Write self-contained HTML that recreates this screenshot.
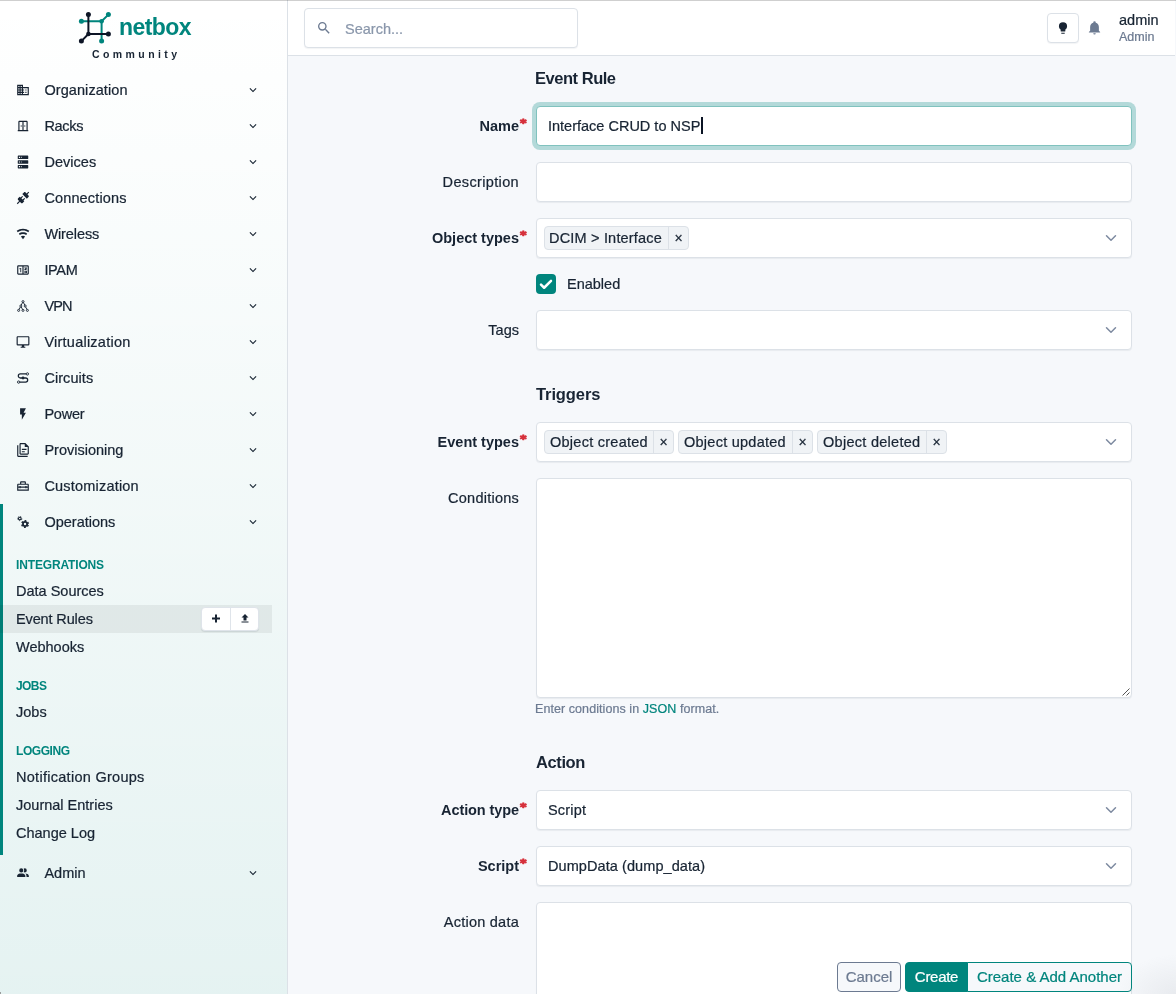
<!DOCTYPE html>
<html lang="en">
<head>
<meta charset="utf-8">
<title>Add a new event rule | NetBox</title>
<style>
*{box-sizing:border-box}
html,body{margin:0;padding:0}
html{width:1176px;height:994px;overflow:hidden;background:#f6f8fb}
body{width:1176px;height:994px;overflow:hidden;position:relative;background:#f6f8fb;color:#182433;
 font-family:"Liberation Sans",sans-serif;font-size:14px;line-height:20px;-webkit-text-stroke:.22px}
svg{display:block}
.topline{position:absolute;left:0;top:0;width:1176px;height:1px;background:rgba(0,0,0,.19);z-index:50}

/* ---------- sidebar ---------- */
.sidebar{position:absolute;left:0;top:0;width:288px;height:994px;border-right:1px solid #dce1e7;
 background:linear-gradient(180deg,rgba(0,133,125,0) 0%,rgba(0,133,125,.1) 100%),#fff}
.brand{position:absolute;left:0;top:0;width:272px;height:72px}
.brand svg{position:absolute;left:76px;top:9px}
.brand .word{position:absolute;left:119px;top:11px;font-weight:700;font-size:23px;line-height:32px;color:#00857d;letter-spacing:-.55px}
.brand .sub{position:absolute;left:92px;top:45.6px;font-weight:700;font-size:10.5px;line-height:16px;color:#182433;letter-spacing:3.42px;white-space:nowrap}
.nav{position:absolute;left:0;top:72px;width:287px;margin:0;padding:0;list-style:none}
.nav>li{position:relative;height:36px}
.nav>li .ico{position:absolute;left:16px;top:11px;width:14px;height:14px}
.nav>li .lbl{position:absolute;left:44.4px;top:8px;line-height:20px;font-size:14.5px;color:#182433;white-space:nowrap}
.nav>li .chev{position:absolute;left:245.5px;top:11px;width:14px;height:14px}
.nav>li.open{height:auto;border-left:3px solid #00857d}
.nav>li.open .head{position:relative;height:36px;margin-left:-3px}
.menu{padding:0 0 8px 0;margin-left:-3px}
.menu .hd{height:25px;margin-top:12px;padding-left:16px;line-height:27px;font-size:12px;font-weight:700;color:#00857d;text-transform:uppercase;white-space:nowrap}
.menu .it{position:relative;height:28px;padding-left:16px;line-height:28px;font-size:14.5px;color:#182433;white-space:nowrap}
.menu .it.act{background:rgba(0,0,0,.06);width:272px}
.bgrp{position:absolute;left:201px;top:2px;width:58px;height:24px;background:#fff;border:1px solid #dfe4ea;border-radius:4px;box-shadow:0 1px 1px rgba(24,36,51,.1);display:flex}
.bgrp span{width:28px;height:22px;display:flex;align-items:center;justify-content:center}
.bgrp svg{transform:translateY(-.5px)}
.bgrp span+span{border-left:1px solid #dfe4ea;width:28px}

/* ---------- topbar ---------- */
.topbar{position:absolute;left:288px;top:0;width:887px;height:56px;background:#fff;border-bottom:1px solid #dce1e7}
.search{position:absolute;left:16px;top:8px;width:274px;height:40px;border:1px solid #dce1e7;border-radius:4px;background:#fff;box-shadow:0 1px 1px rgba(24,36,51,.05)}
.search svg{position:absolute;left:11px;top:11px}
.search .ph{position:absolute;left:40px;top:10px;line-height:20px;color:#8a97ab;font-size:14.5px}
.tbtn{position:absolute;left:759px;top:13px;width:32px;height:30px;border:1px solid #dce1e7;border-radius:4px;background:#fff;box-shadow:0 1px 1px rgba(24,36,51,.05)}
.tbtn svg{position:absolute;left:8px;top:7px}
.bell{position:absolute;left:799px;top:20px}
.user{position:absolute;left:831px;top:11px;line-height:17px}
.user b{display:block;font-weight:400;font-size:14.5px;color:#182433;line-height:18px}
.user i{display:block;font-style:normal;font-size:12.5px;color:#6c7a91;line-height:16px}

.l.req,.h,.brand .word,.brand .sub,.menu .hd{-webkit-text-stroke:0}
/* ---------- form ---------- */
.sidebar,.topbar,main{will-change:transform}
main{position:absolute;left:0;top:0;width:1176px;height:994px;overflow:hidden}
.h{position:absolute;left:536px;margin:0;font-size:16.5px;font-weight:700;line-height:24px;color:#182433;white-space:nowrap;letter-spacing:-.1px}
.l{position:absolute;right:657px;line-height:20px;font-size:14.5px;color:#182433;white-space:nowrap;text-align:right}
.l.req{font-weight:700}
.l.req svg{position:absolute;left:100%;top:2.2px;margin-left:.3px}
.f{position:absolute;left:536px;width:596px;height:40px;border:1px solid #dce1e7;border-radius:4px;background:#fff;box-shadow:0 1px 1px rgba(24,36,51,.06)}
.f.focus{border-color:#80c2be;box-shadow:0 0 0 4px rgba(0,133,125,.27)}
.f .v{position:absolute;left:11px;top:9px;line-height:20px;font-size:14.5px;white-space:nowrap}
.f .caret{position:absolute;top:10px;width:2px;height:17px;background:#0b1424}
.f .sel{position:absolute;right:14px;top:13px}
.tag{position:absolute;top:7px;height:24px;border:1px solid #dce1e7;border-radius:4px;background:#f0f3f6;line-height:22px;font-size:14.5px;white-space:nowrap}
.tag .t{position:absolute;left:5px;top:0}
.tag .x{position:absolute;right:0;top:0;width:20px;height:22px;border-left:1px solid #dce1e7;text-align:center;font-size:14px}
.chk{position:absolute;left:536px;top:274px;width:20px;height:20px;border-radius:4px;background:#00857d}
.chkl{position:absolute;left:567px;top:274px;line-height:20px;font-size:14.5px}
.help{position:absolute;left:535px;top:700px;font-size:12.5px;line-height:18px;color:#6c7a91;white-space:nowrap}
.help a{color:#00857d;text-decoration:none}
.btn{position:absolute;top:962px;height:30px;border:1px solid;line-height:28px;font-size:15px;text-align:center;white-space:nowrap;background:#f6f8fb}
.b1{left:837px;width:64px;border-color:#6c7a91;color:#6c7a91;border-radius:4px}
.b2{left:905px;width:63px;border-color:#00857d;background:#00857d;color:#fff;border-radius:4px 0 0 4px}
.b3{left:967px;width:165px;border-color:#00857d;color:#00857d;border-radius:0 4px 4px 0}
.grip{position:absolute;right:1px;bottom:1px}
.corner{position:absolute;right:0;bottom:0;width:60px;height:40px;background:radial-gradient(ellipse at 100% 100%,rgba(120,125,135,.10),rgba(120,125,135,0) 70%);pointer-events:none}

.bl{position:absolute;left:0;bottom:0;width:1px;height:2px;background:#9a9c9c}
</style>
</head>
<body>
<div class="topline"></div>
<aside class="sidebar">
<div class="brand"><svg width="38" height="38" viewBox="76 9 38 38">
<g stroke-width="2" fill="none" stroke-linecap="round">
<path stroke="#00857d" d="M81.4 21.3H101.6V41.1M101.6 21.3L108.4 14.6"/>
<path stroke="#0d1526" d="M88.4 14.6V34H108.4M88.4 34L81.4 41.1"/>
</g>
<g fill="#00857d"><circle cx="108.4" cy="14.6" r="2.5"/><circle cx="81.4" cy="21.3" r="2.5"/><circle cx="101.6" cy="21.3" r="2.3"/><circle cx="101.6" cy="41.1" r="2.5"/></g>
<g fill="#0d1526"><circle cx="88.4" cy="14.6" r="2.5"/><circle cx="88.4" cy="34" r="2.3"/><circle cx="108.4" cy="34" r="2.5"/><circle cx="81.4" cy="41.1" r="2.5"/></g>
</svg><span class="word">netbox</span><span class="sub">Community</span></div>
<ul class="nav">
<li><svg class="ico" viewBox="0 0 24 24" fill="#182433"><path d="M18,15H16V17H18M18,11H16V13H18M20,19H12V17H14V15H12V13H14V11H12V9H20M10,7H8V5H10M10,11H8V9H10M10,15H8V13H10M10,19H8V17H10M6,7H4V5H6M6,11H4V9H6M6,15H4V13H6M6,19H4V17H6M12,7V3H2V21H22V7H12Z"/></svg><span class="lbl"><span style="letter-spacing:0.08px">Organization</span></span><svg class="chev" viewBox="0 0 24 24"><path fill="#182433" d="M7.41,8.58L12,13.17L16.59,8.58L18,10L12,16L6,10L7.41,8.58Z"/></svg></li>
<li><svg class="ico" viewBox="0 0 24 24" fill="#182433"><path d="M10 13H8V11H10V13M16 11H14V13H16V11M21 19V21H3V19H4V5C4 3.9 4.9 3 6 3H18C19.1 3 20 3.9 20 5V19H21M11 5H6V19H11V5M18 5H13V19H18V5Z"/></svg><span class="lbl"><span style="letter-spacing:-0.28px">Racks</span></span><svg class="chev" viewBox="0 0 24 24"><path fill="#182433" d="M7.41,8.58L12,13.17L16.59,8.58L18,10L12,16L6,10L7.41,8.58Z"/></svg></li>
<li><svg class="ico" viewBox="0 0 24 24" fill="#182433"><path d="M4,1H20A1,1 0 0,1 21,2V6A1,1 0 0,1 20,7H4A1,1 0 0,1 3,6V2A1,1 0 0,1 4,1M4,9H20A1,1 0 0,1 21,10V14A1,1 0 0,1 20,15H4A1,1 0 0,1 3,14V10A1,1 0 0,1 4,9M4,17H20A1,1 0 0,1 21,18V22A1,1 0 0,1 20,23H4A1,1 0 0,1 3,22V18A1,1 0 0,1 4,17M9,5H10V3H9V5M9,13H10V11H9V13M9,21H10V19H9V21M5,3V5H7V3H5M5,11V13H7V11H5M5,19V21H7V19H5Z"/></svg><span class="lbl"><span style="letter-spacing:0.03px">Devices</span></span><svg class="chev" viewBox="0 0 24 24"><path fill="#182433" d="M7.41,8.58L12,13.17L16.59,8.58L18,10L12,16L6,10L7.41,8.58Z"/></svg></li>
<li><svg class="ico" viewBox="0 0 24 24" fill="#182433"><path d="M21.4 7.5C22.2 8.3 22.2 9.6 21.4 10.3L18.6 13.1L10.8 5.3L13.6 2.5C14.4 1.7 15.7 1.7 16.4 2.5L18.2 4.3L21.2 1.3L22.6 2.7L19.6 5.7L21.4 7.5M15.6 13.3L14.2 11.9L11.4 14.7L9.3 12.6L12.1 9.8L10.7 8.4L7.9 11.2L6.4 9.8L3.6 12.6C2.8 13.4 2.8 14.7 3.6 15.4L5.4 17.2L1.4 21.2L2.8 22.6L6.8 18.6L8.6 20.4C9.4 21.2 10.7 21.2 11.4 20.4L14.2 17.6L12.8 16.2L15.6 13.3Z"/></svg><span class="lbl"><span style="letter-spacing:0.14px">Connections</span></span><svg class="chev" viewBox="0 0 24 24"><path fill="#182433" d="M7.41,8.58L12,13.17L16.59,8.58L18,10L12,16L6,10L7.41,8.58Z"/></svg></li>
<li><svg class="ico" viewBox="0 0 24 24" fill="#182433"><path d="M12,21L15.6,16.2C14.6,15.45 13.35,15 12,15C10.65,15 9.4,15.45 8.4,16.2L12,21M12,3C7.95,3 4.21,4.34 1.2,6.6L3,9C5.5,7.12 8.62,6 12,6C15.38,6 18.5,7.12 21,9L22.8,6.6C19.79,4.34 16.05,3 12,3M12,9C9.3,9 6.81,9.89 4.8,11.4L6.6,13.8C8.1,12.67 9.97,12 12,12C14.03,12 15.9,12.67 17.4,13.8L19.2,11.4C17.19,9.89 14.7,9 12,9Z"/></svg><span class="lbl"><span style="letter-spacing:-0.09px">Wireless</span></span><svg class="chev" viewBox="0 0 24 24"><path fill="#182433" d="M7.41,8.58L12,13.17L16.59,8.58L18,10L12,16L6,10L7.41,8.58Z"/></svg></li>
<li><svg class="ico" viewBox="0 0 24 24" fill="#182433"><path d="M4,4H20A2,2 0 0,1 22,6V18A2,2 0 0,1 20,20H4A2,2 0 0,1 2,18V6A2,2 0 0,1 4,4M4,6V18H11V6H4M13,6V18H20V6H13Z" fill-rule="evenodd"/><path d="M8.9,16H7.4V10.2L5.6,10.8V9.5L8.7,8.4H8.9Z"/><path d="M14.2 7.6h4.6v1.3l-2 2.1h2.1v1.3h-4.6v-1.2l2.2-2.2h-2.3zM14.2 13.6h4.6v3.4h-4.6v-1.2h3.2v-.9h-3.2z"/></svg><span class="lbl"><span style="letter-spacing:-0.33px">IPAM</span></span><svg class="chev" viewBox="0 0 24 24"><path fill="#182433" d="M7.41,8.58L12,13.17L16.59,8.58L18,10L12,16L6,10L7.41,8.58Z"/></svg></li>
<li><svg class="ico" viewBox="0 0 24 24" fill="#182433"><g fill="none" stroke="#182433" stroke-width="1.6"><path d="M11.2 6.2L9 10.3M12.8 6.2l2.2 4.1M7.5 13.7l-2.2 4.1M9 13.7l2.2 4.1M16.5 13.7l2.2 4.1"/><circle cx="12" cy="4.5" r="1.75"/><circle cx="8.25" cy="12" r="1.75"/><circle cx="15.75" cy="12" r="1.75"/><circle cx="4.5" cy="19.5" r="1.75"/><circle cx="12" cy="19.5" r="1.75"/><circle cx="19.5" cy="19.5" r="1.75"/></g></svg><span class="lbl"><span style="letter-spacing:-0.85px">VPN</span></span><svg class="chev" viewBox="0 0 24 24"><path fill="#182433" d="M7.41,8.58L12,13.17L16.59,8.58L18,10L12,16L6,10L7.41,8.58Z"/></svg></li>
<li><svg class="ico" viewBox="0 0 24 24" fill="#182433"><path d="M21,16H3V4H21M21,2H3C1.89,2 1,2.89 1,4V16A2,2 0 0,0 3,18H10V20H8V22H16V20H14V18H21A2,2 0 0,0 23,16V4C23,2.89 22.1,2 21,2Z"/></svg><span class="lbl"><span style="letter-spacing:0.24px">Virtualization</span></span><svg class="chev" viewBox="0 0 24 24"><path fill="#182433" d="M7.41,8.58L12,13.17L16.59,8.58L18,10L12,16L6,10L7.41,8.58Z"/></svg></li>
<li><svg class="ico" viewBox="0 0 24 24" fill="#182433"><g fill="none" stroke="#182433" stroke-width="2.2"><path d="M17.5 5H7.5a3.5 3.5 0 0 0 0 7h9a3.5 3.5 0 0 1 0 7H6.5"/></g><circle cx="19.5" cy="5" r="2" fill="none" stroke="#182433" stroke-width="1.6"/><circle cx="4.5" cy="19" r="2" fill="none" stroke="#182433" stroke-width="1.6"/><circle cx="12" cy="12" r="2.4"/></svg><span class="lbl"><span style="letter-spacing:0.06px">Circuits</span></span><svg class="chev" viewBox="0 0 24 24"><path fill="#182433" d="M7.41,8.58L12,13.17L16.59,8.58L18,10L12,16L6,10L7.41,8.58Z"/></svg></li>
<li><svg class="ico" viewBox="0 0 24 24" fill="#182433"><path d="M7,2V13H10V22L17,10H13L17,2H7Z"/></svg><span class="lbl"><span style="letter-spacing:-0.20px">Power</span></span><svg class="chev" viewBox="0 0 24 24"><path fill="#182433" d="M7.41,8.58L12,13.17L16.59,8.58L18,10L12,16L6,10L7.41,8.58Z"/></svg></li>
<li><svg class="ico" viewBox="0 0 24 24" fill="#182433"><path d="M16,0H8C6.9,0 6,.9 6,2V18C6,19.1 6.9,20 8,20H20C21.1,20 22,19.1 22,18V6L16,0M20,18H8V2H15V7H20V18M4,4V22H20V24H4C2.9,24 2,23.1 2,22V4H4M10,10V12H18V10H10M10,14V16H15V14H10Z"/></svg><span class="lbl"><span>Provisioning</span></span><svg class="chev" viewBox="0 0 24 24"><path fill="#182433" d="M7.41,8.58L12,13.17L16.59,8.58L18,10L12,16L6,10L7.41,8.58Z"/></svg></li>
<li><svg class="ico" viewBox="0 0 24 24" fill="#182433"><path d="M20 8H17V6C17 4.9 16.1 4 15 4H9C7.9 4 7 4.9 7 6V8H4C2.9 8 2 8.9 2 10V20H22V10C22 8.9 21.1 8 20 8M9 6H15V8H9V6M20 18H4V15H6V16H8V15H16V16H18V15H20V18M18 13V12H16V13H8V12H6V13H4V10H20V13H18Z"/></svg><span class="lbl"><span style="letter-spacing:0.20px">Customization</span></span><svg class="chev" viewBox="0 0 24 24"><path fill="#182433" d="M7.41,8.58L12,13.17L16.59,8.58L18,10L12,16L6,10L7.41,8.58Z"/></svg></li>
<li class="open"><div class="head"><svg class="ico" viewBox="0 0 24 24" fill="#182433"><g fill="none" stroke="#182433"><circle cx="15.5" cy="15.5" r="3.6" stroke-width="3"/><circle cx="15.5" cy="15.5" r="5.6" stroke-width="2.6" stroke-dasharray="2.93 2.93" stroke-dashoffset="4.39"/><circle cx="6.5" cy="6" r="2.3" stroke-width="1.8"/><circle cx="6.5" cy="6" r="3.6" stroke-width="1.6" stroke-dasharray="1.88 1.88" stroke-dashoffset="2.82"/></g></svg><span class="lbl"><span>Operations</span></span><svg class="chev" viewBox="0 0 24 24"><path fill="#182433" d="M7.41,8.58L12,13.17L16.59,8.58L18,10L12,16L6,10L7.41,8.58Z"/></svg></div>
<div class="menu">
<div class="hd"><span style="letter-spacing:-0.15px">Integrations</span></div>
<div class="it"><span>Data Sources</span></div>
<div class="it act"><span style="letter-spacing:-0.13px">Event Rules</span><div class="bgrp"><span><svg width="12" height="12" viewBox="0 0 24 24"><path fill="#182433" d="M20 14H14V20H10V14H4V10H10V4H14V10H20V14Z"/></svg></span><span><svg width="12" height="12" viewBox="0 0 24 24"><path fill="#182433" d="M9,16V10H5L12,3L19,10H15V16H9M5,20V18H19V20H5Z"/></svg></span></div></div>
<div class="it"><span>Webhooks</span></div>
<div class="hd"><span style="letter-spacing:-0.57px">Jobs</span></div>
<div class="it"><span>Jobs</span></div>
<div class="hd"><span style="letter-spacing:-0.43px">Logging</span></div>
<div class="it"><span style="letter-spacing:0.28px">Notification Groups</span></div>
<div class="it"><span>Journal Entries</span></div>
<div class="it"><span>Change Log</span></div>
</div></li>
<li><svg class="ico" viewBox="0 0 24 24" fill="#182433"><path d="M16 17V19H2V17S2 13 9 13 16 17 16 17M12.5 7.5A3.5 3.5 0 1 0 9 11A3.5 3.5 0 0 0 12.5 7.5M15.94 13A5.32 5.32 0 0 1 18 17V19H22V17S22 13.37 15.94 13M15 4A3.39 3.39 0 0 0 13.07 4.59A5 5 0 0 1 13.07 10.41A3.39 3.39 0 0 0 15 11A3.5 3.5 0 0 0 15 4Z"/></svg><span class="lbl"><span>Admin</span></span><svg class="chev" viewBox="0 0 24 24"><path fill="#182433" d="M7.41,8.58L12,13.17L16.59,8.58L18,10L12,16L6,10L7.41,8.58Z"/></svg></li>
</ul>
</aside>
<header class="topbar">
<div class="search"><svg width="16" height="16" viewBox="0 0 24 24"><path fill="#6c7a91" d="M9.5,3A6.5,6.5 0 0,1 16,9.5C16,11.11 15.41,12.59 14.44,13.73L14.71,14H15.5L20.5,19L19,20.5L14,15.5V14.71L13.73,14.44C12.59,15.41 11.11,16 9.5,16A6.5,6.5 0 0,1 3,9.5A6.5,6.5 0 0,1 9.5,3M9.5,5C7,5 5,7 5,9.5C5,12 7,14 9.5,14C12,14 14,12 14,9.5C14,7 12,5 9.5,5Z"/></svg><span class="ph"><span>Search...</span></span></div>
<div class="tbtn"><svg width="14" height="14" viewBox="0 0 24 24"><path fill="#182433" d="M12,2A7,7 0 0,0 5,9C5,11.38 6.19,13.47 8,14.74V17A1,1 0 0,0 9,18H15A1,1 0 0,0 16,17V14.74C17.81,13.47 19,11.38 19,9A7,7 0 0,0 12,2M9,21A1,1 0 0,0 10,22H14A1,1 0 0,0 15,21V20H9V21Z"/></svg></div>
<svg class="bell" width="15" height="15" viewBox="0 0 24 24"><path fill="#6c7a91" d="M21,19V20H3V19L5,17V11C5,7.9 7.03,5.17 10,4.29C10,4.19 10,4.1 10,4A2,2 0 0,1 12,2A2,2 0 0,1 14,4C14,4.1 14,4.19 14,4.29C16.97,5.17 19,7.9 19,11V17L21,19M14,21A2,2 0 0,1 12,23A2,2 0 0,1 10,21"/></svg>
<div class="user"><b><span>admin</span></b><i><span>Admin</span></i></div>
</header>
<main>
<h2 class="h" style="top:66px;left:535px"><span style="letter-spacing:-0.47px">Event Rule</span></h2>
<label class="l req" style="top:116px"><span>Name</span><svg width="8.6" height="6.7" preserveAspectRatio="none" viewBox="-1.5 -1.5 27 27"><path fill="#d6303b" stroke="#d6303b" stroke-width="3.4" stroke-linejoin="round" d="M10,2H14L13.21,9.91L19.66,5.27L21.66,8.73L14.42,12L21.66,15.27L19.66,18.73L13.21,14.09L14,22H10L10.79,14.09L4.34,18.73L2.34,15.27L9.58,12L2.34,8.73L4.34,5.27L10.79,9.91L10,2Z"/></svg></label>
<div class="f focus" style="top:106px"><span class="v"><span>Interface CRUD to NSP</span></span><span class="caret" style="left:164px"></span></div>
<label class="l" style="top:172px"><span style="letter-spacing:0.35px">Description</span></label>
<div class="f" style="top:162px"></div>
<label class="l req" style="top:228px"><span>Object types</span><svg width="8.6" height="6.7" preserveAspectRatio="none" viewBox="-1.5 -1.5 27 27"><path fill="#d6303b" stroke="#d6303b" stroke-width="3.4" stroke-linejoin="round" d="M10,2H14L13.21,9.91L19.66,5.27L21.66,8.73L14.42,12L21.66,15.27L19.66,18.73L13.21,14.09L14,22H10L10.79,14.09L4.34,18.73L2.34,15.27L9.58,12L2.34,8.73L4.34,5.27L10.79,9.91L10,2Z"/></svg></label>
<div class="f" style="top:218px"><span class="tag" style="left:7px;width:145px"><span class="t" style="left:4px"><span style="letter-spacing:0.19px">DCIM &gt; Interface</span></span><span class="x">×</span></span><svg class="sel" width="12" height="12" viewBox="0 0 16 16"><path fill="none" stroke="#7d8aa0" stroke-linecap="round" stroke-linejoin="round" stroke-width="2" d="m2 5 6 6 6-6"/></svg></div>
<span class="chk"><svg width="20" height="20" viewBox="0 0 16 16"><path fill="none" stroke="#fff" stroke-linecap="round" stroke-linejoin="round" stroke-width="2" d="M4 8.5l2.5 2.5l5.5 -5.5"/></svg></span><span class="chkl"><span>Enabled</span></span>
<label class="l" style="top:320px"><span>Tags</span></label>
<div class="f" style="top:310px"><svg class="sel" width="12" height="12" viewBox="0 0 16 16"><path fill="none" stroke="#7d8aa0" stroke-linecap="round" stroke-linejoin="round" stroke-width="2" d="m2 5 6 6 6-6"/></svg></div>
<h2 class="h" style="top:382px"><span>Triggers</span></h2>
<label class="l req" style="top:432px"><span>Event types</span><svg width="8.6" height="6.7" preserveAspectRatio="none" viewBox="-1.5 -1.5 27 27"><path fill="#d6303b" stroke="#d6303b" stroke-width="3.4" stroke-linejoin="round" d="M10,2H14L13.21,9.91L19.66,5.27L21.66,8.73L14.42,12L21.66,15.27L19.66,18.73L13.21,14.09L14,22H10L10.79,14.09L4.34,18.73L2.34,15.27L9.58,12L2.34,8.73L4.34,5.27L10.79,9.91L10,2Z"/></svg></label>
<div class="f" style="top:422px"><span class="tag" style="left:7px;width:130px"><span class="t"><span style="letter-spacing:0.26px">Object created</span></span><span class="x">×</span></span><span class="tag" style="left:141px;width:135px"><span class="t"><span style="letter-spacing:0.25px">Object updated</span></span><span class="x">×</span></span><span class="tag" style="left:280px;width:130px"><span class="t"><span style="letter-spacing:0.28px">Object deleted</span></span><span class="x">×</span></span><svg class="sel" width="12" height="12" viewBox="0 0 16 16"><path fill="none" stroke="#7d8aa0" stroke-linecap="round" stroke-linejoin="round" stroke-width="2" d="m2 5 6 6 6-6"/></svg></div>
<label class="l" style="top:488px"><span style="letter-spacing:0.24px">Conditions</span></label>
<div class="f ta" style="top:478px;height:220px"><svg class="grip" width="10" height="10" viewBox="0 0 10 10"><path d="M9.5 2.5l-7 7M9.5 6.5l-3 3" stroke="#555" stroke-width="1" fill="none"/></svg></div>
<div class="help"><span style="letter-spacing:0.07px">Enter conditions in <a>JSON</a> format.</span></div>
<h2 class="h" style="top:750px"><span style="letter-spacing:-0.40px">Action</span></h2>
<label class="l req" style="top:800px"><span style="letter-spacing:-0.09px">Action type</span><svg width="8.6" height="6.7" preserveAspectRatio="none" viewBox="-1.5 -1.5 27 27"><path fill="#d6303b" stroke="#d6303b" stroke-width="3.4" stroke-linejoin="round" d="M10,2H14L13.21,9.91L19.66,5.27L21.66,8.73L14.42,12L21.66,15.27L19.66,18.73L13.21,14.09L14,22H10L10.79,14.09L4.34,18.73L2.34,15.27L9.58,12L2.34,8.73L4.34,5.27L10.79,9.91L10,2Z"/></svg></label>
<div class="f" style="top:790px"><span class="v"><span style="letter-spacing:0.20px">Script</span></span><svg class="sel" width="12" height="12" viewBox="0 0 16 16"><path fill="none" stroke="#7d8aa0" stroke-linecap="round" stroke-linejoin="round" stroke-width="2" d="m2 5 6 6 6-6"/></svg></div>
<label class="l req" style="top:856px"><span>Script</span><svg width="8.6" height="6.7" preserveAspectRatio="none" viewBox="-1.5 -1.5 27 27"><path fill="#d6303b" stroke="#d6303b" stroke-width="3.4" stroke-linejoin="round" d="M10,2H14L13.21,9.91L19.66,5.27L21.66,8.73L14.42,12L21.66,15.27L19.66,18.73L13.21,14.09L14,22H10L10.79,14.09L4.34,18.73L2.34,15.27L9.58,12L2.34,8.73L4.34,5.27L10.79,9.91L10,2Z"/></svg></label>
<div class="f" style="top:846px"><span class="v"><span style="letter-spacing:0.08px">DumpData (dump_data)</span></span><svg class="sel" width="12" height="12" viewBox="0 0 16 16"><path fill="none" stroke="#7d8aa0" stroke-linecap="round" stroke-linejoin="round" stroke-width="2" d="m2 5 6 6 6-6"/></svg></div>
<label class="l" style="top:912px"><span style="letter-spacing:0.24px">Action data</span></label>
<div class="f ta" style="top:902px;height:120px"></div>
<a class="btn b1"><span>Cancel</span></a>
<a class="btn b2"><span style="letter-spacing:-0.28px">Create</span></a>
<a class="btn b3"><span>Create &amp; Add Another</span></a>
</main>
<div class="corner"></div><div class="bl"></div>
</body>
</html>
